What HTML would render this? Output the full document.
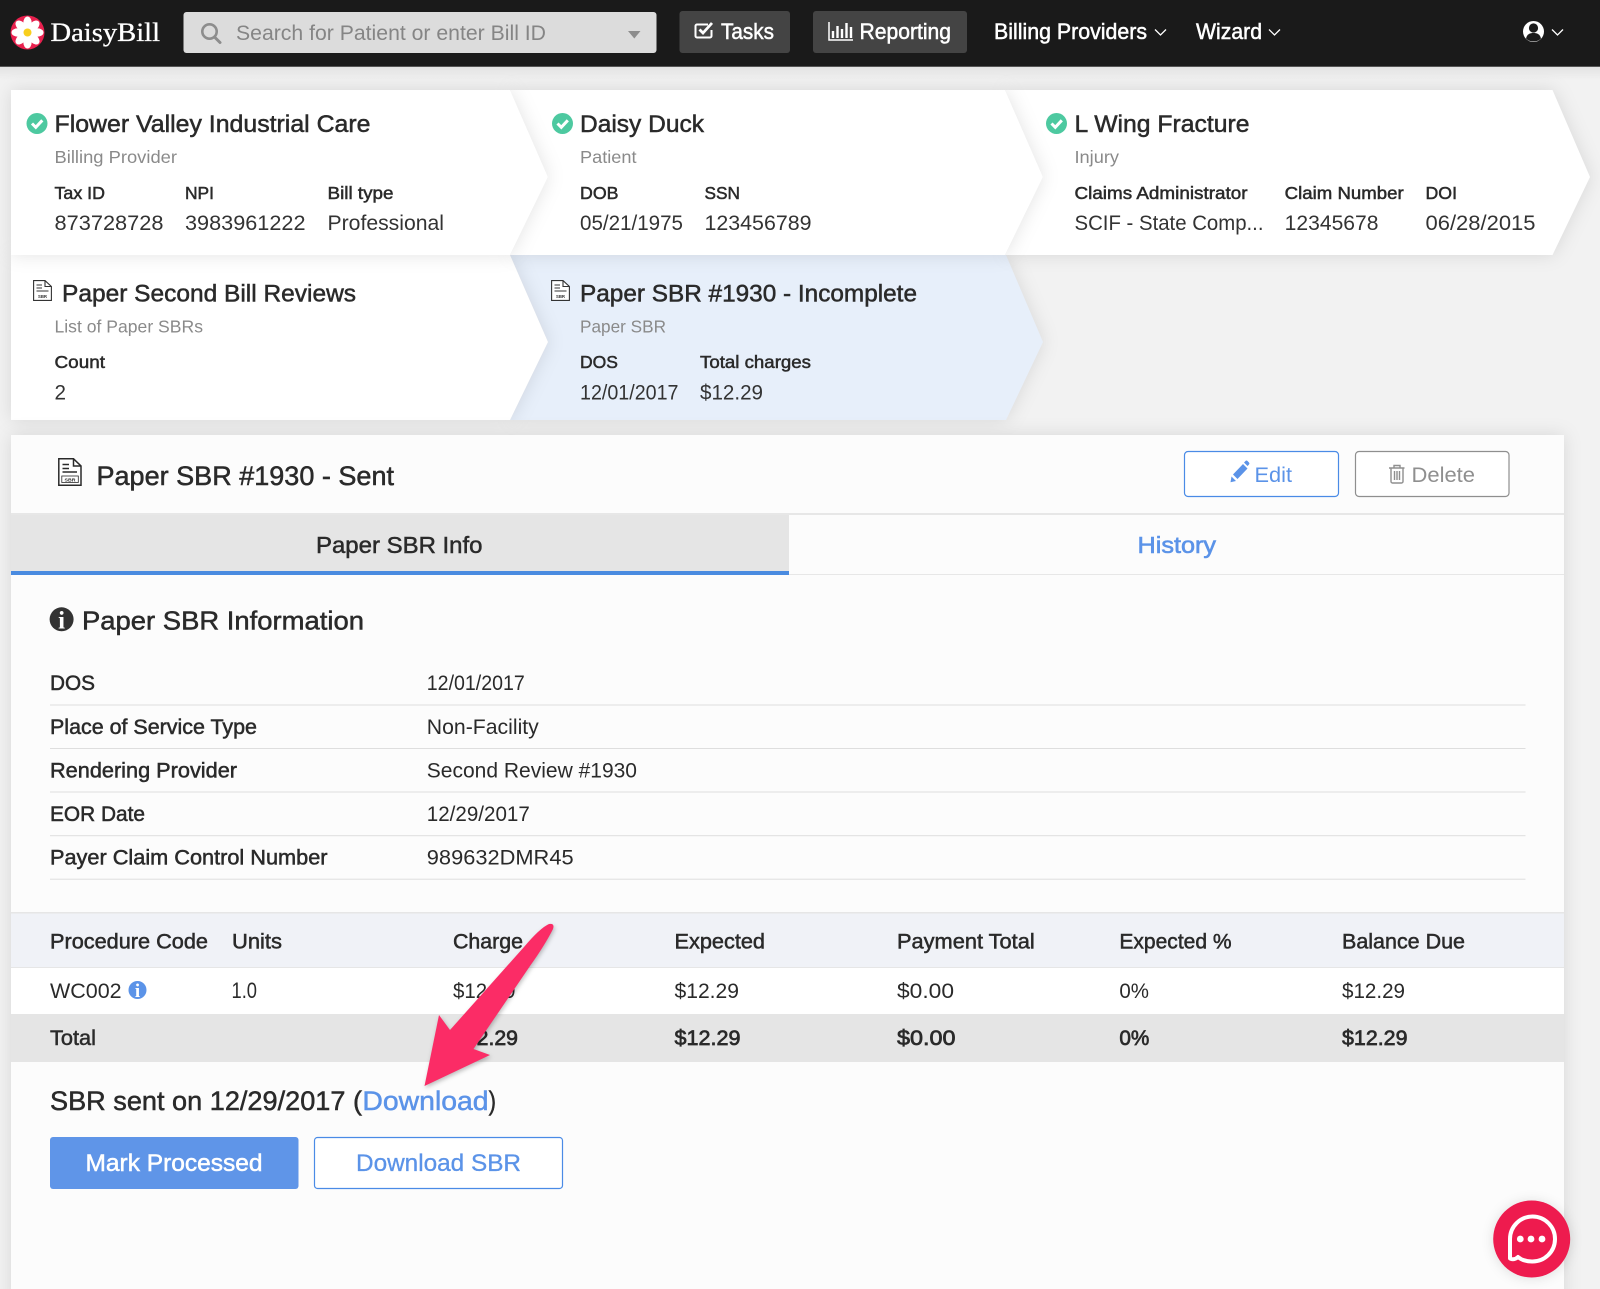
<!DOCTYPE html>
<html lang="en">
<head>
<meta charset="utf-8">
<title>DaisyBill - Paper SBR #1930</title>
<style>
html,body{margin:0;padding:0;background:#f2f2f2;width:1600px;height:1289px;overflow:hidden}
svg{display:block}
text{font-family:"Liberation Sans",Arial,sans-serif;fill:#2a2a2a;white-space:pre}
.m{stroke:currentColor;stroke-width:.5px;color:#2a2a2a}
.ttl{font-size:24px}
.sub{font-size:17.5px;fill:#8a8a8a}
.lab{font-size:17.5px}
.val{font-size:21px;fill:#333}
.row{font-size:21px}
.nav{font-size:22px;fill:#fff}
.blue{fill:#5b93e8;color:#5b93e8}
.card{filter:drop-shadow(0 0 9px rgba(0,0,0,.11))}
.tiny{font-size:4.5px;font-weight:bold;fill:#333}
</style>
</head>
<body>
<svg xmlns="http://www.w3.org/2000/svg" width="1600" height="1289" viewBox="0 0 1600 1289">
<defs>
<linearGradient id="hs" x1="0" y1="0" x2="0" y2="1"><stop offset="0" stop-color="#000" stop-opacity=".06"/><stop offset="1" stop-color="#000" stop-opacity="0"/></linearGradient>
</defs>
<rect width="1600" height="1289" fill="#f2f2f2"/>

<!-- header -->
<rect y="67" width="1600" height="14" fill="url(#hs)"/>
<rect width="1600" height="66" fill="#1a1a1a"/>
<rect y="66" width="1600" height="1" fill="#555"/>
<circle cx="27.5" cy="32.5" r="17" fill="#e8204e"/>
<g fill="#fff">
<ellipse cx="27.5" cy="23" rx="4.2" ry="6.5"/>
<ellipse cx="27.5" cy="42" rx="4.2" ry="6.5"/>
<ellipse cx="18" cy="32.5" rx="6.5" ry="4.2"/>
<ellipse cx="37" cy="32.5" rx="6.5" ry="4.2"/>
<ellipse cx="20.8" cy="25.8" rx="4.2" ry="6.2" transform="rotate(-45 20.8 25.8)"/>
<ellipse cx="34.2" cy="25.8" rx="4.2" ry="6.2" transform="rotate(45 34.2 25.8)"/>
<ellipse cx="20.8" cy="39.2" rx="4.2" ry="6.2" transform="rotate(45 20.8 39.2)"/>
<ellipse cx="34.2" cy="39.2" rx="4.2" ry="6.2" transform="rotate(-45 34.2 39.2)"/>
</g>
<circle cx="27.5" cy="32.5" r="4" fill="#f8cf1d"/>
<text x="50.5" y="41" textLength="109.5" lengthAdjust="spacingAndGlyphs" stroke="#fff" stroke-width=".3" style="font-family:'Liberation Serif',serif;font-size:26px;fill:#fff">DaisyBill</text>

<rect x="183.5" y="12" width="473" height="41" rx="3" fill="#dcdcdc"/>
<circle cx="209.5" cy="31.5" r="7.2" fill="none" stroke="#8d8d8d" stroke-width="2.6"/>
<path d="M214.5 37l5.5 5.5" stroke="#8d8d8d" stroke-width="3" stroke-linecap="round"/>
<text x="236" y="40" textLength="310" lengthAdjust="spacingAndGlyphs" style="font-size:21.5px;fill:#858585">Search for Patient or enter Bill ID</text>
<path d="M628 31h12.500l-6.200 7.500z" fill="#8d8d8d"/>

<rect x="679.500" y="11" width="110.500" height="42" rx="3" fill="#444"/>
<path d="M708 24.500h-11a1.500 1.500 0 0 0-1.500 1.500v10a1.500 1.500 0 0 0 1.500 1.500h13a1.500 1.500 0 0 0 1.500-1.500v-6" fill="none" stroke="#fff" stroke-width="2"/>
<path d="M699.500 29.500l3.500 3.500l9-10" fill="none" stroke="#fff" stroke-width="2.800"/>
<text class="nav m" x="721" y="39" textLength="53" lengthAdjust="spacingAndGlyphs" style="color:#fff">Tasks</text>

<rect x="813" y="11" width="154" height="42" rx="3" fill="#444"/>
<path d="M829 22v18h24" fill="none" stroke="#fff" stroke-width="1.500"/>
<path d="M833 31v7M837.500 26v12M842 29v9M846.500 23v15M851 27v11" stroke="#fff" stroke-width="2.400"/>
<text class="nav m" x="859.500" y="39" textLength="91.500" lengthAdjust="spacingAndGlyphs" style="color:#fff">Reporting</text>

<text class="nav m" x="994" y="39" textLength="153" lengthAdjust="spacingAndGlyphs" style="color:#fff">Billing Providers</text>
<path d="M1155 29.500l5.500 5.500l5.500-5.500" fill="none" stroke="#fff" stroke-width="1.300"/>
<text class="nav m" x="1196" y="39" textLength="66" lengthAdjust="spacingAndGlyphs" style="color:#fff">Wizard</text>
<path d="M1269 29.500l5.500 5.500l5.500-5.500" fill="none" stroke="#fff" stroke-width="1.300"/>
<circle cx="1533.500" cy="31.500" r="10.500" fill="#fff"/>
<circle cx="1533.500" cy="28" r="4.600" fill="#1a1a1a"/>
<path d="M1526 38.500c1-4.500 4-5.500 7.500-5.500s6.500 1 7.500 5.500c-2 2-4.500 3-7.500 3s-5.500-1-7.500-3z" fill="#1a1a1a"/>
<path d="M1552 29.500l5.500 5.500l5.500-5.500" fill="none" stroke="#fff" stroke-width="1.300"/>

<!-- breadcrumb cards, back to front -->
<path class="card" d="M510 255H1006L1043 342L1006 420H510L548 342Z" fill="#e7effa"/>
<path class="card" d="M11 255H510L548 342L510 420H11Z" fill="#fff"/>
<path class="card" d="M1005 90H1552.500L1590 177L1552.500 255H1005L1043 177Z" fill="#fff"/>
<path class="card" d="M510 90H1005L1043 177L1005 255H510L548 177Z" fill="#fff"/>
<path class="card" d="M11 90H510L548 177L510 255H11Z" fill="#fff"/>

<!-- card 1 -->
<circle cx="37" cy="123.500" r="10.500" fill="#4dc9a0"/>
<path d="M32 123.500l3.800 3.800l6.500-7" fill="none" stroke="#fff" stroke-width="3"/>
<text class="ttl m" x="54.500" y="132" textLength="316" lengthAdjust="spacingAndGlyphs">Flower Valley Industrial Care</text>
<text class="sub" x="54.500" y="163" textLength="122.500" lengthAdjust="spacingAndGlyphs">Billing Provider</text>
<text class="lab m" x="54.500" y="199" textLength="50.500" lengthAdjust="spacingAndGlyphs">Tax ID</text>
<text class="lab m" x="185" y="199" textLength="29" lengthAdjust="spacingAndGlyphs">NPI</text>
<text class="lab m" x="327.500" y="199" textLength="66" lengthAdjust="spacingAndGlyphs">Bill type</text>
<text class="val" x="54.500" y="230" textLength="109" lengthAdjust="spacingAndGlyphs">873728728</text>
<text class="val" x="185" y="230" textLength="120.500" lengthAdjust="spacingAndGlyphs">3983961222</text>
<text class="val" x="327.500" y="230" textLength="116.500" lengthAdjust="spacingAndGlyphs">Professional</text>

<!-- card 2 -->
<circle cx="562.500" cy="123.500" r="10.500" fill="#4dc9a0"/>
<path d="M557.500 123.500l3.800 3.800l6.500-7" fill="none" stroke="#fff" stroke-width="3"/>
<text class="ttl m" x="580" y="132" textLength="124" lengthAdjust="spacingAndGlyphs">Daisy Duck</text>
<text class="sub" x="580" y="163" textLength="56.500" lengthAdjust="spacingAndGlyphs">Patient</text>
<text class="lab m" x="580" y="199" textLength="38.500" lengthAdjust="spacingAndGlyphs">DOB</text>
<text class="lab m" x="704.500" y="199" textLength="35.500" lengthAdjust="spacingAndGlyphs">SSN</text>
<text class="val" x="580" y="230" textLength="103" lengthAdjust="spacingAndGlyphs">05/21/1975</text>
<text class="val" x="704.500" y="230" textLength="107" lengthAdjust="spacingAndGlyphs">123456789</text>

<!-- card 3 -->
<circle cx="1056.500" cy="123.500" r="10.500" fill="#4dc9a0"/>
<path d="M1051.500 123.500l3.800 3.800l6.500-7" fill="none" stroke="#fff" stroke-width="3"/>
<text class="ttl m" x="1074.500" y="132" textLength="175" lengthAdjust="spacingAndGlyphs">L Wing Fracture</text>
<text class="sub" x="1074.500" y="163" textLength="44.500" lengthAdjust="spacingAndGlyphs">Injury</text>
<text class="lab m" x="1074.500" y="199" textLength="173" lengthAdjust="spacingAndGlyphs">Claims Administrator</text>
<text class="lab m" x="1284.700" y="199" textLength="119" lengthAdjust="spacingAndGlyphs">Claim Number</text>
<text class="lab m" x="1425.500" y="199" textLength="31.500" lengthAdjust="spacingAndGlyphs">DOI</text>
<text class="val" x="1074.500" y="230" textLength="189" lengthAdjust="spacingAndGlyphs">SCIF - State Comp...</text>
<text class="val" x="1284.700" y="230" textLength="93.800" lengthAdjust="spacingAndGlyphs">12345678</text>
<text class="val" x="1425.500" y="230" textLength="110" lengthAdjust="spacingAndGlyphs">06/28/2015</text>

<!-- card 4 -->
<g transform="translate(33 280)" fill="none" stroke="#333" stroke-width="1.100">
<path d="M.6.6H12L18.400 6.500V20.400H.6Z" fill="#fff"/><path d="M12 .6V6.500H18.400"/><path d="M3.500 5H9M3.500 8H9M3.500 11H15.500"/>
<text class="tiny" x="5" y="18" textLength="9" lengthAdjust="spacingAndGlyphs" stroke="none">SBR</text>
</g>
<text class="ttl m" x="62" y="301.500" textLength="294" lengthAdjust="spacingAndGlyphs">Paper Second Bill Reviews</text>
<text class="sub" x="54.500" y="332.500" textLength="148.500" lengthAdjust="spacingAndGlyphs">List of Paper SBRs</text>
<text class="lab m" x="54.500" y="368" textLength="50.500" lengthAdjust="spacingAndGlyphs">Count</text>
<text class="val" x="54.500" y="399.500" textLength="11.500" lengthAdjust="spacingAndGlyphs">2</text>

<!-- card 5 -->
<g transform="translate(551 280)" fill="none" stroke="#333" stroke-width="1.100">
<path d="M.6.6H12L18.400 6.500V20.400H.6Z" fill="#fff"/><path d="M12 .6V6.500H18.400"/><path d="M3.500 5H9M3.500 8H9M3.500 11H15.500"/>
<text class="tiny" x="5" y="18" textLength="9" lengthAdjust="spacingAndGlyphs" stroke="none">SBR</text>
</g>
<text class="ttl m" x="580" y="301.500" textLength="337" lengthAdjust="spacingAndGlyphs">Paper SBR #1930 - Incomplete</text>
<text class="sub" x="580" y="332.500" textLength="86" lengthAdjust="spacingAndGlyphs">Paper SBR</text>
<text class="lab m" x="580" y="368" textLength="38" lengthAdjust="spacingAndGlyphs">DOS</text>
<text class="lab m" x="700" y="368" textLength="111" lengthAdjust="spacingAndGlyphs">Total charges</text>
<text class="val" x="580" y="399.500" textLength="98.500" lengthAdjust="spacingAndGlyphs">12/01/2017</text>
<text class="val" x="700" y="399.500" textLength="63" lengthAdjust="spacingAndGlyphs">$12.29</text>

<!-- main panel -->
<rect class="card" x="11" y="435" width="1553" height="870" fill="#fcfcfc"/>
<g transform="translate(58 458)" fill="none" stroke="#2a2a2a" stroke-width="1.500">
<path d="M.8.8H15.500L23 8V27.200H.8Z" fill="#fff"/><path d="M15.500 .8V8H23"/><path d="M4.500 6.500H11M4.500 10.500H11M4.500 14H19"/>
<rect x="3.800" y="18" width="16.500" height="6.500" stroke-width=".8"/>
<text class="tiny" x="6.500" y="23.300" textLength="11" lengthAdjust="spacingAndGlyphs" stroke="none">SBR</text>
</g>
<text class="m" x="96.500" y="485" textLength="297.500" lengthAdjust="spacingAndGlyphs" style="font-size:26.500px">Paper SBR #1930 - Sent</text>

<rect x="1184.500" y="451.500" width="154" height="45" rx="3.500" fill="#fff" stroke="#4a8be6" stroke-width="1.200"/>
<path d="M1233 474.500l10-10.500l4.500 4.500l-10 10.500zM1231.500 476.500l4.500 4.500l-5.500 1.300zM1244 462.500l1.500-1.500a1.500 1.500 0 0 1 2 0l1.500 1.500a1.500 1.500 0 0 1 0 2l-1.500 1.500z" fill="#5b93e8"/>
<text x="1254.500" y="482" textLength="37.500" lengthAdjust="spacingAndGlyphs" style="font-size:21px;fill:#5b93e8">Edit</text>

<rect x="1355.500" y="451.500" width="153.500" height="45" rx="3.500" fill="#fff" stroke="#8f8f8f" stroke-width="1.200"/>
<path d="M1389 468h15.500M1394 468v-2.500h6V468M1391 468v13.500a1.500 1.500 0 0 0 1.500 1.500h9a1.500 1.500 0 0 0 1.500-1.500V468M1394.500 471v9M1397 471v9M1399.500 471v9" fill="none" stroke="#8f8f8f" stroke-width="1.400"/>
<text x="1411.500" y="482" textLength="63.500" lengthAdjust="spacingAndGlyphs" style="font-size:21px;fill:#8f8f8f">Delete</text>

<rect x="11" y="513" width="1553" height="2" fill="#e7e7e7"/>
<rect x="11" y="515" width="778" height="56" fill="#e5e5e5"/>
<rect x="11" y="574" width="1553" height="1" fill="#e7e7e7"/>
<rect x="11" y="571" width="778" height="4" fill="#4a8be0"/>
<text class="m" x="316" y="553" textLength="166.500" lengthAdjust="spacingAndGlyphs" style="font-size:23px">Paper SBR Info</text>
<text class="m blue" x="1137.500" y="553" textLength="78.500" lengthAdjust="spacingAndGlyphs" style="font-size:23px;stroke-width:.6px">History</text>

<!-- info section -->
<circle cx="61.600" cy="619.300" r="12" fill="#333"/>
<text x="61.600" y="628.500" text-anchor="middle" style="font-family:'Liberation Serif',serif;font-weight:bold;font-size:25px;fill:#fff">i</text>
<text class="m" x="82" y="629.300" textLength="282" lengthAdjust="spacingAndGlyphs" style="font-size:26px">Paper SBR Information</text>

<text class="row m" x="50" y="690" textLength="45" lengthAdjust="spacingAndGlyphs">DOS</text>
<text class="row" x="426.800" y="690" textLength="98" lengthAdjust="spacingAndGlyphs">12/01/2017</text>
<rect x="50" y="704.500" width="1475.500" height="1" fill="#dedede"/>
<text class="row m" x="50" y="734" textLength="207" lengthAdjust="spacingAndGlyphs">Place of Service Type</text>
<text class="row" x="426.800" y="734" textLength="112" lengthAdjust="spacingAndGlyphs">Non-Facility</text>
<rect x="50" y="748" width="1475.500" height="1" fill="#dedede"/>
<text class="row m" x="50" y="777.700" textLength="187" lengthAdjust="spacingAndGlyphs">Rendering Provider</text>
<text class="row" x="426.800" y="777.700" textLength="210.200" lengthAdjust="spacingAndGlyphs">Second Review #1930</text>
<rect x="50" y="791.500" width="1475.500" height="1" fill="#dedede"/>
<text class="row m" x="50" y="821" textLength="95" lengthAdjust="spacingAndGlyphs">EOR Date</text>
<text class="row" x="426.800" y="821" textLength="103" lengthAdjust="spacingAndGlyphs">12/29/2017</text>
<rect x="50" y="835.200" width="1475.500" height="1" fill="#dedede"/>
<text class="row m" x="50" y="864.300" textLength="277.500" lengthAdjust="spacingAndGlyphs">Payer Claim Control Number</text>
<text class="row" x="426.800" y="864.300" textLength="146.800" lengthAdjust="spacingAndGlyphs">989632DMR45</text>
<rect x="50" y="878.700" width="1475.500" height="1" fill="#dedede"/>

<!-- table -->
<rect x="11" y="913" width="1553" height="55" fill="#f0f2f7"/>
<rect x="11" y="912" width="1553" height="1.500" fill="#e6e6e6"/>
<rect x="11" y="967" width="1553" height="1.500" fill="#e6e6e6"/>
<rect x="11" y="968" width="1553" height="46" fill="#fff"/>
<rect x="11" y="1014" width="1553" height="48" fill="#e5e5e5"/>

<text class="row m" x="50" y="948.500" textLength="158" lengthAdjust="spacingAndGlyphs">Procedure Code</text>
<text class="row m" x="232" y="948.500" textLength="50" lengthAdjust="spacingAndGlyphs">Units</text>
<text class="row m" x="453" y="948.500" textLength="70" lengthAdjust="spacingAndGlyphs">Charge</text>
<text class="row m" x="674.500" y="948.500" textLength="90.500" lengthAdjust="spacingAndGlyphs">Expected</text>
<text class="row m" x="897" y="948.500" textLength="137.700" lengthAdjust="spacingAndGlyphs">Payment Total</text>
<text class="row m" x="1119.400" y="948.500" textLength="112.200" lengthAdjust="spacingAndGlyphs">Expected %</text>
<text class="row m" x="1342" y="948.500" textLength="123" lengthAdjust="spacingAndGlyphs">Balance Due</text>

<text class="row" x="50" y="998" textLength="71.600" lengthAdjust="spacingAndGlyphs">WC002</text>
<circle cx="137.500" cy="990" r="9" fill="#5b93e8"/>
<text x="137.500" y="997" text-anchor="middle" style="font-family:'Liberation Serif',serif;font-weight:bold;font-size:19px;fill:#fff">i</text>
<text class="row" x="231.500" y="998" textLength="25.500" lengthAdjust="spacingAndGlyphs" style="font-size:22px">1.0</text>
<text class="row" x="453" y="998" textLength="62.500" lengthAdjust="spacingAndGlyphs">$12.29</text>
<text class="row" x="674.500" y="998" textLength="64.500" lengthAdjust="spacingAndGlyphs">$12.29</text>
<text class="row" x="897" y="998" textLength="57" lengthAdjust="spacingAndGlyphs">$0.00</text>
<text class="row" x="1119.400" y="998" textLength="29.600" lengthAdjust="spacingAndGlyphs">0%</text>
<text class="row" x="1342" y="998" textLength="63" lengthAdjust="spacingAndGlyphs">$12.29</text>

<text class="row m" x="50" y="1045" textLength="46" lengthAdjust="spacingAndGlyphs">Total</text>
<text class="row m" x="453" y="1045" textLength="65" lengthAdjust="spacingAndGlyphs" style="stroke-width:.7px">$12.29</text>
<text class="row m" x="674.500" y="1045" textLength="66" lengthAdjust="spacingAndGlyphs" style="stroke-width:.7px">$12.29</text>
<text class="row m" x="897" y="1045" textLength="58.500" lengthAdjust="spacingAndGlyphs" style="stroke-width:.7px">$0.00</text>
<text class="row m" x="1119.400" y="1045" textLength="30" lengthAdjust="spacingAndGlyphs" style="stroke-width:.7px">0%</text>
<text class="row m" x="1342" y="1045" textLength="65.500" lengthAdjust="spacingAndGlyphs" style="stroke-width:.7px">$12.29</text>

<!-- sent line -->
<text class="m" x="50" y="1110" textLength="312" lengthAdjust="spacingAndGlyphs" style="font-size:27px">SBR sent on 12/29/2017 (</text>
<text class="m blue" x="362.400" y="1110" textLength="126.200" lengthAdjust="spacingAndGlyphs" style="font-size:27px">Download</text>
<text class="m" x="488.600" y="1110" textLength="7.400" lengthAdjust="spacingAndGlyphs" style="font-size:27px">)</text>

<rect x="50" y="1137" width="248.500" height="52" rx="3" fill="#5f95e8"/>
<text class="m" x="85.500" y="1171" textLength="177" lengthAdjust="spacingAndGlyphs" style="font-size:24px;fill:#fff;color:#fff">Mark Processed</text>
<rect x="314.500" y="1137.500" width="248" height="51" rx="3" fill="#fff" stroke="#4a8be6" stroke-width="1.200"/>
<text class="blue m" x="356" y="1171" textLength="165" lengthAdjust="spacingAndGlyphs" style="font-size:24px;stroke-width:.3px">Download SBR</text>

<!-- annotation arrow -->
<path d="M424.500 1086L439 1015L450 1030L524 947Q540 928 549 924Q555 923 553 929Q545 945 530 966L473.500 1049L490 1055Z" fill="#fb2c66" style="filter:drop-shadow(1px 2px 2px rgba(0,0,0,.25))"/>

<!-- chat bubble -->
<circle cx="1531.700" cy="1239" r="38.500" fill="#ee1b4e" style="filter:drop-shadow(0 1px 6px rgba(0,0,0,.12))"/>
<path d="M1510 1258.500L1510 1239A22.500 22.500 0 1 1 1532 1261.500C1526 1261.500 1521 1259.500 1518 1257C1516 1259 1513 1260 1510 1258.500Z" fill="none" stroke="#fff" stroke-width="4" stroke-linejoin="round"/>
<circle cx="1520.300" cy="1239" r="3.400" fill="#fff"/>
<circle cx="1531" cy="1239" r="3.400" fill="#fff"/>
<circle cx="1542" cy="1239" r="3.400" fill="#fff"/>
</svg>
</body>
</html>
